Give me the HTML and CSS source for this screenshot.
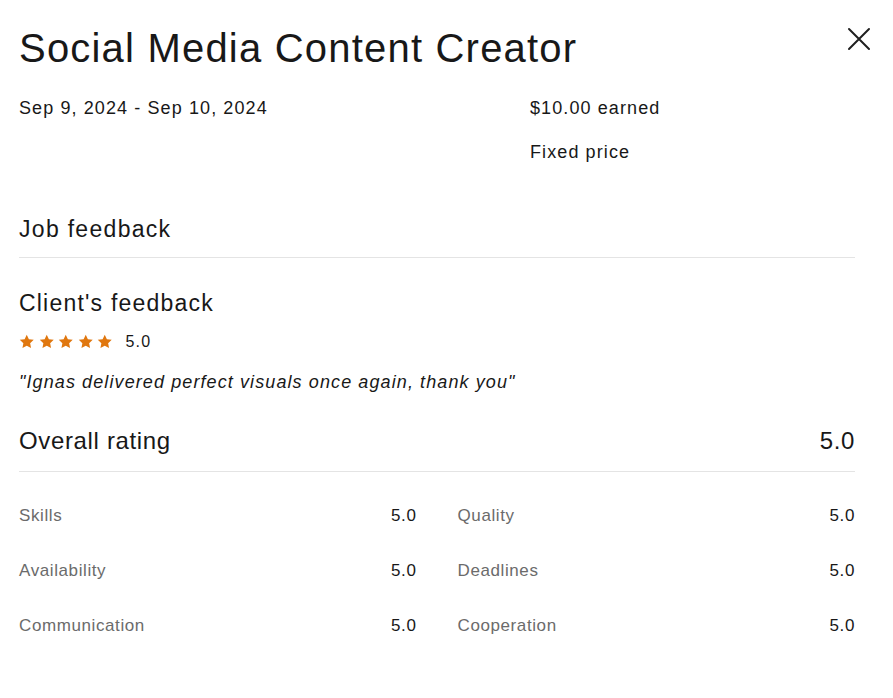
FILE: index.html
```html
<!DOCTYPE html>
<html>
<head>
<meta charset="utf-8">
<link rel="stylesheet" href="styles.css">
</head>
<body>
<div class="modal">
  <header class="head">
    <h1 class="title">Social Media Content Creator</h1>
    <button class="close" aria-label="Close">
      <svg width="24" height="24" viewBox="0 0 24 24"><path d="M2 2 L22 22 M22 2 L2 22" stroke="#1f1f1f" stroke-width="2" stroke-linecap="round"/></svg>
    </button>
  </header>
  <div class="meta">
    <div class="dates">Sep 9, 2024 - Sep 10, 2024</div>
    <div class="pay">
      <div>$10.00 earned</div>
      <div class="fixed">Fixed price</div>
    </div>
  </div>
  <h2 class="section">Job feedback</h2>
  <h3 class="sub">Client's feedback</h3>
  <div class="stars">
    <span class="star-row">
      <svg viewBox="0 0 16 16" class="star"><path d="M8 .8l2.2 4.6 5 .6-3.7 3.5.95 5L8 12.1l-4.45 2.4.95-5L.8 6l5-.6z"/></svg>
      <svg viewBox="0 0 16 16" class="star"><path d="M8 .8l2.2 4.6 5 .6-3.7 3.5.95 5L8 12.1l-4.45 2.4.95-5L.8 6l5-.6z"/></svg>
      <svg viewBox="0 0 16 16" class="star"><path d="M8 .8l2.2 4.6 5 .6-3.7 3.5.95 5L8 12.1l-4.45 2.4.95-5L.8 6l5-.6z"/></svg>
      <svg viewBox="0 0 16 16" class="star"><path d="M8 .8l2.2 4.6 5 .6-3.7 3.5.95 5L8 12.1l-4.45 2.4.95-5L.8 6l5-.6z"/></svg>
      <svg viewBox="0 0 16 16" class="star"><path d="M8 .8l2.2 4.6 5 .6-3.7 3.5.95 5L8 12.1l-4.45 2.4.95-5L.8 6l5-.6z"/></svg>
    </span>
    <span class="score">5.0</span>
  </div>
  <p class="quote">"Ignas delivered perfect visuals once again, thank you"</p>
  <div class="overall">
    <span>Overall rating</span>
    <span>5.0</span>
  </div>
  <div class="grid">
    <div class="item"><span class="label">Skills</span><span class="val">5.0</span></div>
    <div class="item"><span class="label">Quality</span><span class="val">5.0</span></div>
    <div class="item"><span class="label">Availability</span><span class="val">5.0</span></div>
    <div class="item"><span class="label">Deadlines</span><span class="val">5.0</span></div>
    <div class="item"><span class="label">Communication</span><span class="val">5.0</span></div>
    <div class="item"><span class="label">Cooperation</span><span class="val">5.0</span></div>
  </div>
</div>
</body>
</html>
```
FILE: styles.css
```css
* { box-sizing: border-box; }
body {
  margin: 0;
  background: #fff;
  font-family: "Liberation Sans", Arial, sans-serif;
  color: #181818;
}
.modal {
  width: 893px;
  padding: 22px 38px 0 19px;
}
.head {
  display: flex;
  justify-content: space-between;
  align-items: flex-start;
}
.title {
  margin: 0;
  font-size: 40px;
  font-weight: 400;
  line-height: 52px;
  letter-spacing: 1.2px;
}
.close {
  background: none;
  border: 0;
  padding: 0;
  margin: 5px -16px 0 0;
  width: 24px;
  height: 24px;
  cursor: pointer;
}
.meta {
  display: grid;
  grid-template-columns: 511px 1fr;
  margin-top: 22px;
  font-size: 18px;
  line-height: 24px;
  letter-spacing: 1.1px;
}
.fixed { margin-top: 20px; }
.section {
  margin: 50px 0 0;
  font-size: 23px;
  font-weight: 400;
  line-height: 30px;
  letter-spacing: 1.3px;
  padding-bottom: 13px;
  border-bottom: 1px solid #e4e4e4;
}
.sub {
  margin: 30px 0 0;
  font-size: 23px;
  font-weight: 400;
  line-height: 30px;
  letter-spacing: 1.2px;
}
.stars {
  display: flex;
  align-items: center;
  margin-top: 13px;
  height: 22px;
}
.star-row { display: flex; gap: 4px; }
.star { width: 15.5px; height: 15.5px; fill: #e0770f; }
.score { margin-left: 13px; font-size: 16px; letter-spacing: 1.2px; }
.quote {
  margin: 17px 0 0;
  font-style: italic;
  font-size: 18px;
  line-height: 24px;
  letter-spacing: 1.1px;
}
.overall {
  display: flex;
  justify-content: space-between;
  margin-top: 31px;
  font-size: 24px;
  line-height: 32px;
  letter-spacing: 0.65px;
  padding-bottom: 14px;
  border-bottom: 1px solid #e4e4e4;
}
.grid {
  display: grid;
  grid-template-columns: 1fr 1fr;
  column-gap: 41px;
  row-gap: 31px;
  margin-top: 32px;
}
.item {
  display: flex;
  justify-content: space-between;
  font-size: 17px;
  line-height: 24px;
  letter-spacing: 0.6px;
}
.label { color: #6b6b6b; }
.val { color: #181818; }
```
